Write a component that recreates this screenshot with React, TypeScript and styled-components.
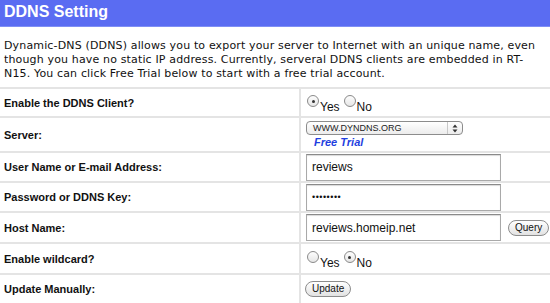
import { createGlobalStyle, styled } from "styled-components";

const GlobalStyle = createGlobalStyle`
  html, body {
    margin: 0;
    padding: 0;
    background: #fff;
  }
  body {
    width: 550px;
    height: 303px;
    overflow: hidden;
    font-family: "Liberation Sans", Arial, sans-serif;
  }
`;

const Header = styled.div`
  height: 27px;
  background-color: #5a6cf2;
  border-bottom: 1px solid #7f8ff5;
  box-sizing: border-box;
  color: #fff;
  font-size: 16px;
  font-weight: bold;
  line-height: 24px;
  padding-left: 4px;
`;

const Desc = styled.p`
  margin: 0;
  padding: 12px 4px 0;
  font-family: "DejaVu Sans", Verdana, sans-serif;
  font-size: 11px;
  letter-spacing: 0.15px;
  line-height: 14px;
  color: #111;
  height: 60px;
  box-sizing: border-box;
  white-space: nowrap;
`;

const Table = styled.div`
  border-top: 2px solid #e4e4e4;
`;

const Row = styled.div<{ h: number }>`
  display: grid;
  grid-template-columns: 301px 1fr;
  height: ${(p) => p.h}px;
  border-bottom: 2px solid #e4e4e4;
`;

const Label = styled.div`
  border-right: 2px solid #e4e4e4;
  display: flex;
  align-items: center;
  padding-left: 4px;
  font-size: 11px;
  font-weight: bold;
  color: #111;
`;

const Field = styled.div`
  display: flex;
  align-items: center;
  gap: 7px;
  padding-left: 4px;
`;

const FieldStack = styled.div`
  display: flex;
  flex-direction: column;
  justify-content: center;
  padding-left: 4px;
`;

const RadioGroup = styled.div`
  display: flex;
  align-items: flex-start;
  padding-top: 4px;
`;

const RadioItem = styled.label`
  display: flex;
  align-items: flex-start;
  font-size: 12px;
  color: #111;
  margin-right: 2px;
`;

const RadioText = styled.span`
  padding-top: 5px;
  padding-left: 1px;
`;

const Circle = styled.span<{ on?: boolean }>`
  width: 10px;
  height: 10px;
  border-radius: 50%;
  border: 1px solid #8a8a8a;
  background: linear-gradient(#fdfdfd, #e6e6e6);
  display: flex;
  align-items: center;
  justify-content: center;
  margin-left: 2px;
  &::after {
    content: "";
    width: 3px;
    height: 3px;
    border-radius: 50%;
    background: ${(p) => (p.on ? "#333" : "transparent")};
  }
`;

const Select = styled.div`
  width: 157px;
  height: 14px;
  box-sizing: border-box;
  border: 1px solid #8c8c8c;
  border-radius: 4px;
  background: linear-gradient(#ffffff, #ececec);
  display: flex;
  align-items: center;
  justify-content: space-between;
  padding: 0 0 0 6px;
  font-size: 9px;
  color: #222;
  margin-left: 1px;
`;

const Spinner = styled.span`
  width: 14px;
  height: 100%;
  border-left: 1px solid #c8c8c8;
  display: flex;
  align-items: center;
  justify-content: center;
`;

const TrialLink = styled.a`
  font-size: 11px;
  font-weight: bold;
  font-style: italic;
  color: #1f3fe0;
  padding-left: 9px;
  padding-top: 1px;
  text-decoration: none;
`;

const TextInput = styled.div<{ small?: boolean }>`
  width: 195px;
  height: 27px;
  box-sizing: border-box;
  border: 1px solid #a9a9a9;
  border-top-color: #8a8a8a;
  box-shadow: inset 0 1px 1px rgba(0, 0, 0, 0.15);
  display: flex;
  align-items: center;
  padding-left: 5px;
  font-size: ${(p) => (p.small ? "9px" : "12px")};
  color: #111;
  letter-spacing: ${(p) => (p.small ? "0.5px" : "0")};
  margin-left: 1px;
`;

const Pill = styled.button`
  height: 16px;
  padding: 0 6px;
  border: 1px solid #8c8c8c;
  border-radius: 8px;
  background: linear-gradient(#ffffff, #e2e2e2);
  font-family: "Liberation Sans", Arial, sans-serif;
  font-size: 10px;
  color: #111;
  line-height: 14px;
`;

function Radio({ on, text }: { on?: boolean; text: string }) {
  return (
    <RadioItem>
      <Circle on={on} />
      <RadioText>{text}</RadioText>
    </RadioItem>
  );
}

export default function App() {
  return (
    <>
      <GlobalStyle />
      <Header>DDNS Setting</Header>
      <Desc>
        Dynamic-DNS (DDNS) allows you to export your server to Internet with an unique name, even
        <br />
        though you have no static IP address. Currently, serveral DDNS clients are embedded in RT-
        <br />
        N15. You can click Free Trial below to start with a free trial account.
      </Desc>
      <Table>
        <Row h={27}>
          <Label>Enable the DDNS Client?</Label>
          <Field>
            <RadioGroup>
              <Radio on text="Yes" />
              <Radio text="No" />
            </RadioGroup>
          </Field>
        </Row>
        <Row h={33}>
          <Label>Server:</Label>
          <FieldStack>
            <Select>
              WWW.DYNDNS.ORG
              <Spinner>
                <svg width="6" height="9" viewBox="0 0 6 9">
                  <path d="M3 0.5 L5.5 3.5 H0.5 Z M3 8.5 L5.5 5.5 H0.5 Z" fill="#333" />
                </svg>
              </Spinner>
            </Select>
            <TrialLink>Free Trial</TrialLink>
          </FieldStack>
        </Row>
        <Row h={28}>
          <Label>User Name or E-mail Address:</Label>
          <Field>
            <TextInput>reviews</TextInput>
          </Field>
        </Row>
        <Row h={28}>
          <Label>Password or DDNS Key:</Label>
          <Field>
            <TextInput small>••••••••</TextInput>
          </Field>
        </Row>
        <Row h={29}>
          <Label>Host Name:</Label>
          <Field>
            <TextInput>reviews.homeip.net</TextInput>
            <Pill>Query</Pill>
          </Field>
        </Row>
        <Row h={29}>
          <Label>Enable wildcard?</Label>
          <Field>
            <RadioGroup>
              <Radio text="Yes" />
              <Radio on text="No" />
            </RadioGroup>
          </Field>
        </Row>
        <Row h={28}>
          <Label>Update Manually:</Label>
          <Field>
            <Pill>Update</Pill>
          </Field>
        </Row>
      </Table>
    </>
  );
}
